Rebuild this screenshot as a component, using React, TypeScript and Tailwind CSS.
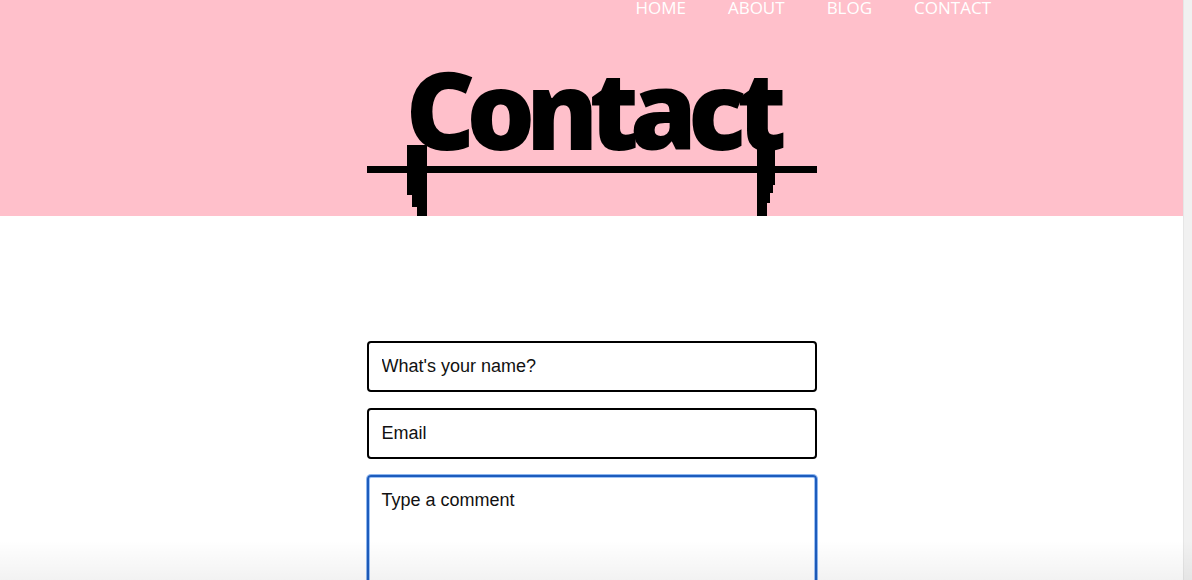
import React from "react";

export default function App() {
  return (
    <div className="relative flex h-[580px] w-full overflow-hidden bg-white">
      <div className="flex min-w-0 flex-1 flex-col">
        <header className="relative h-[216px] shrink-0 overflow-hidden bg-[#ffc0cb]">
          <nav
            className="flex justify-end gap-[42px] pr-[192px] text-[17px] leading-4 text-white"
            style={{ fontFamily: '"Open Sans", sans-serif' }}
          >
            <a>HOME</a>
            <a>ABOUT</a>
            <a>BLOG</a>
            <a>CONTACT</a>
          </nav>
          <div className="relative mx-auto w-[450px] pt-[39px]">
            <h1
              className="mb-[3px] text-center text-[108px] font-extrabold leading-none tracking-[-0.085em] text-black"
              style={{ fontFamily: '"Open Sans", sans-serif' }}
            >
              Contact
            </h1>
            <div className="h-[7px] bg-black" />
            <svg
              className="pointer-events-none absolute left-0 top-[-16px]"
              width="450"
              height="216"
              viewBox="0 0 450 216"
              overflow="visible"
            >
              <polygon
                fill="#000"
                points="40,145 60,145 60,216 50,216 50,207 45,207 45,195 40,195"
              />
              <polygon
                fill="#000"
                points="390,143 408,143 408,185 406,185 406,193 403,193 403,203 400,203 400,216 390,216"
              />
            </svg>
          </div>
        </header>
        <form
          className="mx-auto mt-[125px] flex w-[450px] shrink-0 flex-col gap-4"
          style={{ fontFamily: '"Liberation Sans", Arial, sans-serif' }}
        >
          <input
            className="h-[51px] rounded-[4px] border-2 border-black px-[13px] text-[18px] text-[#111] outline-none placeholder:text-[#111]"
            placeholder="What's your name?"
          />
          <input
            className="h-[51px] rounded-[4px] border-2 border-black px-[13px] text-[18px] text-[#111] outline-none placeholder:text-[#111]"
            placeholder="Email"
          />
          <textarea
            className="h-[160px] resize-none rounded-[4px] border-2 border-[#1d5cbd] px-[13px] pt-[12px] text-[18px] leading-[22px] text-[#111] shadow-[0_0_0_1px_#8db6ef,inset_0_0_0_1px_#9fc3f5] outline-none placeholder:text-[#111]"
            placeholder="Type a comment"
          />
        </form>
      </div>
      <div className="w-[9px] shrink-0 border-l border-[#e6e6e6] bg-[#f1f1f1]" />
      <div className="pointer-events-none absolute bottom-0 left-0 right-0 h-[40px] bg-gradient-to-b from-transparent to-black/[0.05]" />
    </div>
  );
}
